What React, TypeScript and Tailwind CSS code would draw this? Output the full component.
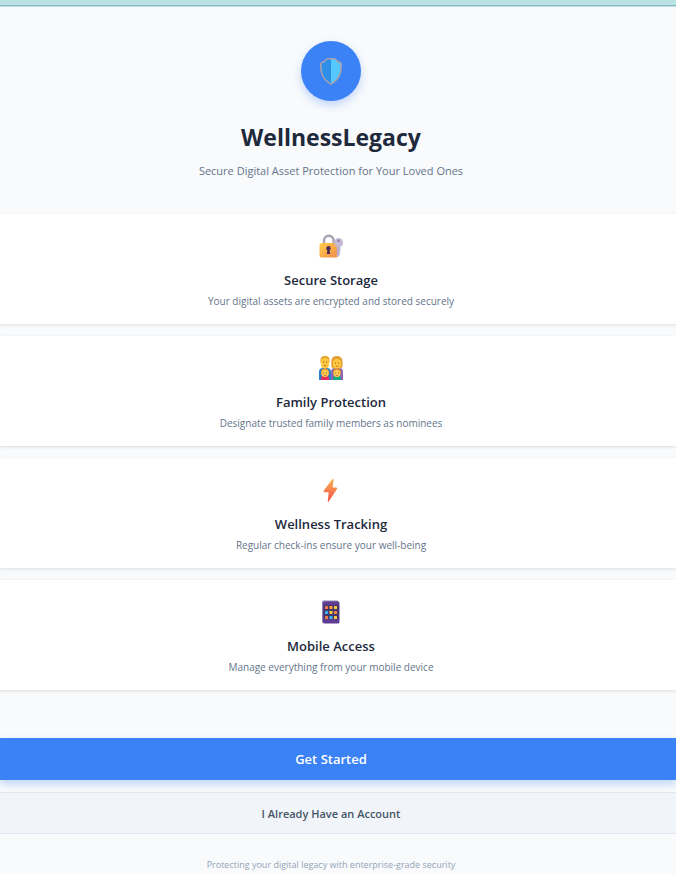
import type { ReactNode } from 'react';

function ShieldIcon() {
  return (
    <svg className="size-7" viewBox="0 0 28 28" aria-hidden="true">
      <path d="M14 1c2.600 0 3.800 0 5 .5C20 3.500 21.500 4.500 24 5c.8 1 1 2 1 4 0 8.500-3 14.500-11 19C6 23.500 3 17.500 3 9c0-2 .2-3 1-4 2.500-.5 4-1.500 5-3.500C10.200 1 11.400 1 14 1z" fill="#a7a0b0" />
      <path d="M14 2.500h-4C9 4.500 7.500 5.700 4.800 6.200 4 14 5.500 21.500 14 26.200z" fill="#2f8fe8" />
      <path d="M14 2.500h4c1 2 2.500 3.200 5.200 3.700C24 14 22.500 21.500 14 26.200z" fill="#55c8ff" />
    </svg>
  );
}

function LockIcon() {
  return (
    <svg className="size-6" viewBox="0 0 24 24" aria-hidden="true">
      <defs>
        <linearGradient id="lock-body" x1="0" y1="0" x2="1" y2="1">
          <stop offset="0" stopColor="#ffcf48" />
          <stop offset="1" stopColor="#f08a4b" />
        </linearGradient>
      </defs>
      <path d="M5 10V6.500a4.800 4.800 0 0 1 9.600 0V10" fill="none" stroke="#aaa3b5" strokeWidth="2.400" />
      <rect x="0.500" y="9" width="18.500" height="14.500" rx="2" fill="url(#lock-body)" />
      <path d="M19.500 4a4.600 4.600 0 0 1 2 8.700V17l-1 1 1 1.300-1 1.200v1.300L19 23l-1.200-1.500v-8.800A4.600 4.600 0 0 1 19.500 4z" fill="#c4b8d6" />
      <circle cx="19.500" cy="6.800" r="1.200" fill="#8f80a8" />
      <circle cx="9.500" cy="14.200" r="2.200" fill="#4b2b55" />
      <path d="M8.500 15h2l.6 5H7.900z" fill="#4b2b55" />
      <path d="M19 13v8" stroke="#a394bd" strokeWidth=".8" />
    </svg>
  );
}

function FamilyIcon() {
  return (
    <svg className="size-6" viewBox="0 0 24 24" aria-hidden="true">
      <path d="M0 24v-8q0-4 4-4h4q4 0 4 4v8z" fill="#2b83cf" />
      <path d="M12 24v-8q0-4 4-4h4q4 0 4 4v8z" fill="#8f64b5" />
      <path d="M1.500 4Q1.500 0 6 0t4.500 4v3h-9z" fill="#e3a126" />
      <rect x="2" y="2" width="8" height="10.500" rx="3.800" fill="#ffc83d" />
      <path d="M12.300 10.500V5.500Q12.300 0 17.800 0t5.700 5.500v5q-1 2-3 2h-5q-2.500 0-3.200-2z" fill="#e29f38" />
      <rect x="14" y="3" width="8" height="9.500" rx="3.700" fill="#ffc83d" />
      <path d="M4.200 6h1M7.200 6h1M16 7h1M19.200 7h1" stroke="#805033" strokeWidth="1.100" />
      <path d="M4.600 9.200q1.400 1.100 2.800 0M16.600 10q1.400 1.100 2.800 0" fill="none" stroke="#b7652e" strokeWidth=".8" />
      <path d="M2 24v-2q0-2 2-2h4q2 0 2 2v2z" fill="#e02f5c" />
      <path d="M14 24v-2q0-2 2-2h4q2 0 2 2v2z" fill="#14a583" />
      <path d="M2 19v-3q0-3.500 4-3.500t4 3.500v3z" fill="#ed9a31" />
      <path d="M14 18v-2q0-3.500 4-3.500t4 3.500v2z" fill="#d9892e" />
      <rect x="2.700" y="14" width="6.600" height="7" rx="3" fill="#ffce52" />
      <rect x="14.700" y="14" width="6.600" height="7" rx="3" fill="#ffce52" />
      <path d="M4.200 17h1M7 17h1M16.200 17h1M19 17h1" stroke="#805033" strokeWidth="1" />
      <path d="M4.800 19.300q1.200 1 2.400 0M16.800 19.300q1.200 1 2.400 0" fill="none" stroke="#c4523b" strokeWidth=".8" />
    </svg>
  );
}

function BoltIcon() {
  return (
    <svg className="size-6" viewBox="0 0 24 24" aria-hidden="true">
      <defs>
        <linearGradient id="bolt-fill" x1="0" y1="0" x2="0" y2="1">
          <stop offset="0" stopColor="#fbb052" />
          <stop offset="1" stopColor="#f4504b" />
        </linearGradient>
      </defs>
      <path d="M13.500 1 4.800 12.500q-.5 1.500.7 1.700h4.200L8.700 23.300q.2.900 1 .3L18 11q.3-1.300-.8-1.500h-3.600L14.700 1.500q-.4-.9-1.200-.5z" fill="url(#bolt-fill)" />
    </svg>
  );
}

function PhoneIcon() {
  const keys = ['#ff7a45', '#ffa436', '#ffd03b', '#35b8f5', '#ffd03b', '#ff8a45', '#ff7a45', '#35b8f5', '#ffd03b'];
  return (
    <svg className="size-6" viewBox="0 0 24 24" aria-hidden="true">
      <rect x="3" y="0.500" width="16.500" height="22.500" rx="1.500" fill="#8e84b8" />
      <rect x="4" y="1.500" width="16.500" height="22" rx="1.500" fill="#5d3c92" />
      <rect x="4.800" y="5" width="15" height="14" fill="#45366b" />
      {keys.map((color, i) => (
        <rect key={i} x={6 + (i % 3) * 4.5} y={6 + Math.floor(i / 3) * 5} width="3" height="3" rx=".4" fill={color} />
      ))}
    </svg>
  );
}

const features: { title: string; text: string; icon: ReactNode }[] = [
  { title: 'Secure Storage', text: 'Your digital assets are encrypted and stored securely', icon: <LockIcon /> },
  { title: 'Family Protection', text: 'Designate trusted family members as nominees', icon: <FamilyIcon /> },
  { title: 'Wellness Tracking', text: 'Regular check-ins ensure your well-being', icon: <BoltIcon /> },
  { title: 'Mobile Access', text: 'Manage everything from your mobile device', icon: <PhoneIcon /> },
];

export default function App() {
  return (
    <div className="bg-[#f8fafc] pb-px font-['Open_Sans',sans-serif] text-[#1e293b]">
      <div className="h-[7px] border-b border-[#b8e2e4] bg-[#b8e2e4]">
        <div className="h-[6px] border-b border-[#8db5bf]" />
      </div>

      <header className="flex flex-col items-center pt-[34px] pr-3.5 text-center">
        <div className="flex size-[60px] items-center justify-center rounded-full bg-[#3b82f6] shadow-[0_4px_8px_rgba(59,130,246,0.3)]">
          <ShieldIcon />
        </div>
        <h1 className="mt-5 text-[23px] leading-8 font-bold">WellnessLegacy</h1>
        <p className="mt-2 text-[11px] leading-5 text-[#64748b]">Secure Digital Asset Protection for Your Loved Ones</p>
      </header>

      <main className="mt-[33px] flex flex-col gap-3">
        {features.map((feature) => (
          <section
            key={feature.title}
            className="flex h-[110px] flex-col items-center bg-white pt-5 pr-3.5 text-center shadow-[0_1px_3px_rgba(0,0,0,0.12)]"
          >
            {feature.icon}
            <h2 className="mt-3 text-[13px] leading-5 font-semibold">{feature.title}</h2>
            <p className="mt-1 text-[10px] leading-[14px] text-[#64748b]">{feature.text}</p>
          </section>
        ))}
      </main>

      <div className="mt-12 flex flex-col gap-3">
        <button className="h-[42px] bg-[#3b82f6] pt-0.5 pr-3.5 text-[13px] font-semibold text-white shadow-[0_4px_8px_rgba(59,130,246,0.3)]">
          Get Started
        </button>
        <button className="h-[42px] border-y border-[#e2e8f0] bg-[#f1f5f9] pt-0.5 pr-3.5 text-[11px] font-semibold text-[#475569]">
          I Already Have an Account
        </button>
      </div>

      <footer className="mt-[23px] pr-3.5 text-center text-[9px] leading-4 text-[#94a3b8]">
        Protecting your digital legacy with enterprise-grade security
      </footer>
    </div>
  );
}
